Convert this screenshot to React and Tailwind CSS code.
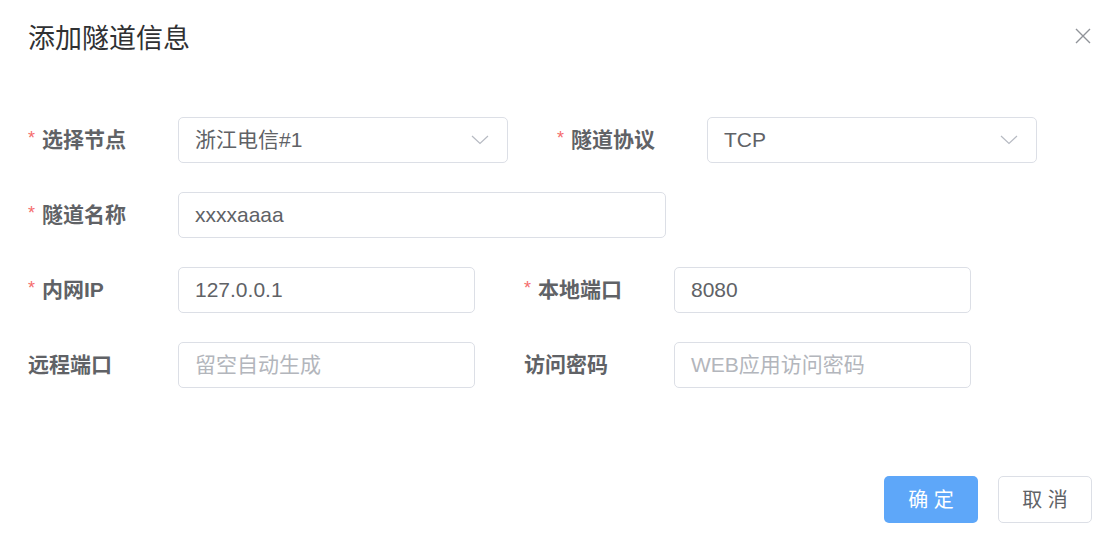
import React from 'react';

const font = { fontFamily: '"Liberation Sans", "Noto Sans CJK SC", sans-serif' };

const Label = ({ required, children }) => (
  <div className="w-[150px] shrink-0 flex items-center text-[21px] font-bold text-[#606266]">
    {required && <span className="text-[#f56c6c] text-[18px] font-normal mr-[7px] -mt-[4px]">*</span>}
    {children}
  </div>
);

const Chevron = () => (
  <svg width="18" height="10" viewBox="0 0 18 10" fill="none" className="shrink-0">
    <path d="M1 1 L9 8.5 L17 1" stroke="#b6bac2" strokeWidth="1.2" />
  </svg>
);

const Field = ({ width, value, placeholder, select }) => (
  <div
    className={`${width} h-[46px] shrink-0 flex items-center justify-between pl-[16px] pr-[18px] border border-[#dcdfe6] rounded-[5px] bg-white text-[21px]`}
  >
    {value ? (
      <span className="text-[#606266]">{value}</span>
    ) : (
      <span className="text-[#b3b6bc]">{placeholder}</span>
    )}
    {select && <Chevron />}
  </div>
);

const App = () => {
  return (
    <div className="w-[1119px] h-[550px] bg-white flex flex-col" style={font}>
      {/* Header */}
      <div className="flex items-start justify-between pl-[28px] pr-[28px] pt-[20px]">
        <h2 className="text-[27px] leading-[38px] text-[#303133]">添加隧道信息</h2>
        <svg width="16" height="16" viewBox="0 0 16 16" className="mt-[8px]">
          <path d="M1 1 L15 15 M15 1 L1 15" stroke="#909399" strokeWidth="1.4" />
        </svg>
      </div>

      {/* Form */}
      <div className="flex flex-col gap-[29px] pl-[28px] mt-[59px]">
        <div className="flex items-center">
          <Label required>选择节点</Label>
          <Field width="w-[330px]" value="浙江电信#1" select />
          <div className="w-[49px] shrink-0" />
          <Label required>隧道协议</Label>
          <Field width="w-[330px]" value="TCP" select />
        </div>
        <div className="flex items-center">
          <Label required>隧道名称</Label>
          <Field width="w-[488px]" value="xxxxaaaa" />
        </div>
        <div className="flex items-center">
          <Label required>内网IP</Label>
          <Field width="w-[297px]" value="127.0.0.1" />
          <div className="w-[49px] shrink-0" />
          <Label required>本地端口</Label>
          <Field width="w-[297px]" value="8080" />
        </div>
        <div className="flex items-center">
          <Label>远程端口</Label>
          <Field width="w-[297px]" placeholder="留空自动生成" />
          <div className="w-[49px] shrink-0" />
          <Label>访问密码</Label>
          <Field width="w-[297px]" placeholder="WEB应用访问密码" />
        </div>
      </div>

      {/* Footer */}
      <div className="flex justify-end gap-[20px] pr-[27px] mt-auto mb-[27px]">
        <button className="w-[94px] h-[47px] rounded-[5px] bg-[#5ea7f9] text-white text-[20px]">确 定</button>
        <button className="w-[94px] h-[47px] rounded-[5px] border border-[#dcdfe6] bg-white text-[#606266] text-[20px]">取 消</button>
      </div>
    </div>
  );
};

export default App;
